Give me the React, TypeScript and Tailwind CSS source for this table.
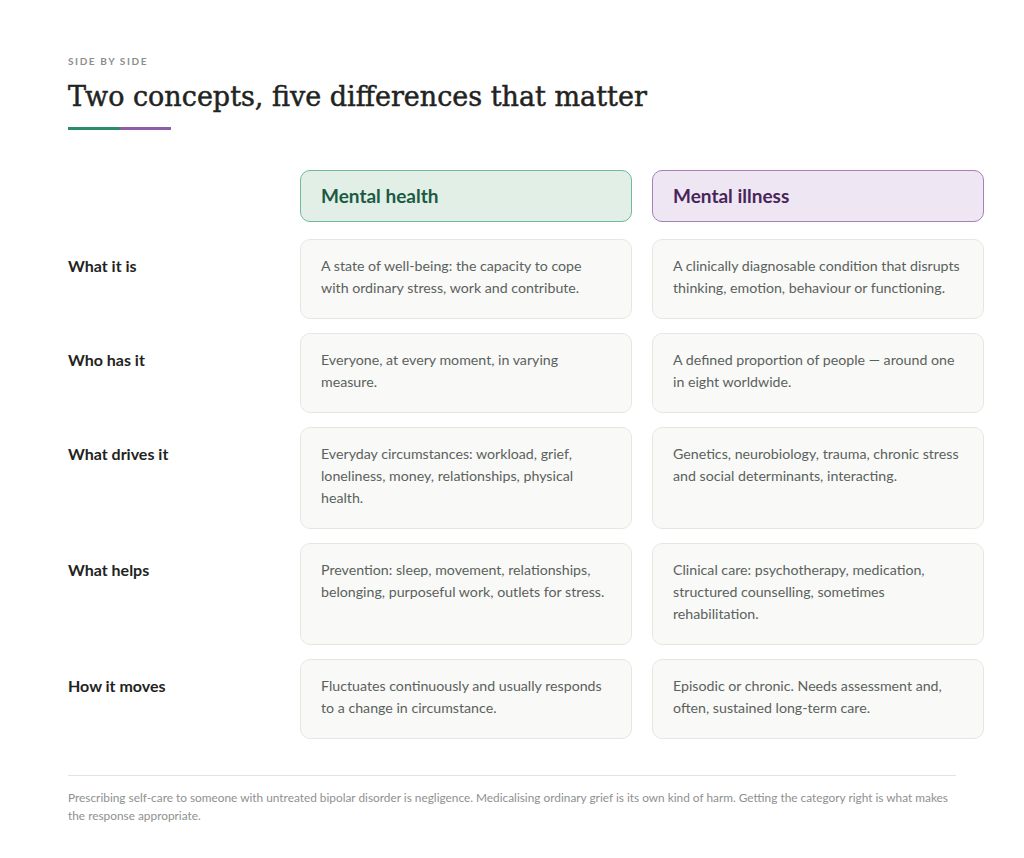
const rows = [
  {
    label: "What it is",
    health: "A state of well-being: the capacity to cope with ordinary stress, work and contribute.",
    illness: "A clinically diagnosable condition that disrupts thinking, emotion, behaviour or functioning.",
  },
  {
    label: "Who has it",
    health: "Everyone, at every moment, in varying measure.",
    illness: "A defined proportion of people — around one in eight worldwide.",
  },
  {
    label: "What drives it",
    health: "Everyday circumstances: workload, grief, loneliness, money, relationships, physical health.",
    illness: "Genetics, neurobiology, trauma, chronic stress and social determinants, interacting.",
  },
  {
    label: "What helps",
    health: "Prevention: sleep, movement, relationships, belonging, purposeful work, outlets for stress.",
    illness: "Clinical care: psychotherapy, medication, structured counselling, sometimes rehabilitation.",
  },
  {
    label: "How it moves",
    health: "Fluctuates continuously and usually responds to a change in circumstance.",
    illness: "Episodic or chronic. Needs assessment and, often, sustained long-term care.",
  },
]

function Cell({ text }: { text: string }) {
  return (
    <div className="rounded-[10px] border border-[#e7e7e2] bg-[#f9f9f7] px-5 pt-[15px] pb-[19px] text-[14.2px] leading-[22px] text-[#5a625d]">
      {text}
    </div>
  )
}

export default function App() {
  return (
    <div className="min-h-[858px] bg-white font-['Lato','Noto_Sans',sans-serif]">
      <div className="w-[888px] ml-[68px] pt-[54px]">
        <div className="text-[10px] font-bold tracking-[0.16em] text-[#8b8e8c] leading-[14px]">SIDE BY SIDE</div>
        <h1 className="mt-[9px] font-['DejaVu_Serif','Liberation_Serif',serif] text-[27px] leading-[40px] text-[#1f2422] [-webkit-text-stroke:0.5px_#1f2422]">
          Two concepts, five differences that matter
        </h1>
        <div className="mt-[10px] flex h-[3px] w-[103px]">
          <div className="w-[52px] bg-[#2b8c6b]" />
          <div className="flex-1 bg-[#8d5ea6]" />
        </div>

        <div className="mt-[40px] grid w-[916px] grid-cols-[212px_332px_332px] gap-x-5 gap-y-[14px]">
          <div />
          <div className="mb-[3px] rounded-[10px] border border-[#72b89c] bg-[#e2efe7] px-5 py-[12px] text-[19px] font-bold leading-[26px] text-[#1c5a43]">
            Mental health
          </div>
          <div className="mb-[3px] rounded-[10px] border border-[#a77fbb] bg-[#efe6f3] px-5 py-[12px] text-[19px] font-bold leading-[26px] text-[#482558]">
            Mental illness
          </div>
          {rows.map((r) => (
            <div key={r.label} className="contents">
              <div className="pt-[16px] text-[16px] font-bold leading-[22px] text-[#1f2422]">{r.label}</div>
              <Cell text={r.health} />
              <Cell text={r.illness} />
            </div>
          ))}
        </div>

        <div className="mt-[36px] border-t border-[#e4e4df] pt-[13px] text-[11.85px] leading-[18px] text-[#8e918f]">
          Prescribing self-care to someone with untreated bipolar disorder is negligence. Medicalising ordinary grief is its own kind of harm. Getting the category right is what makes the response appropriate.
        </div>
      </div>
    </div>
  )
}
